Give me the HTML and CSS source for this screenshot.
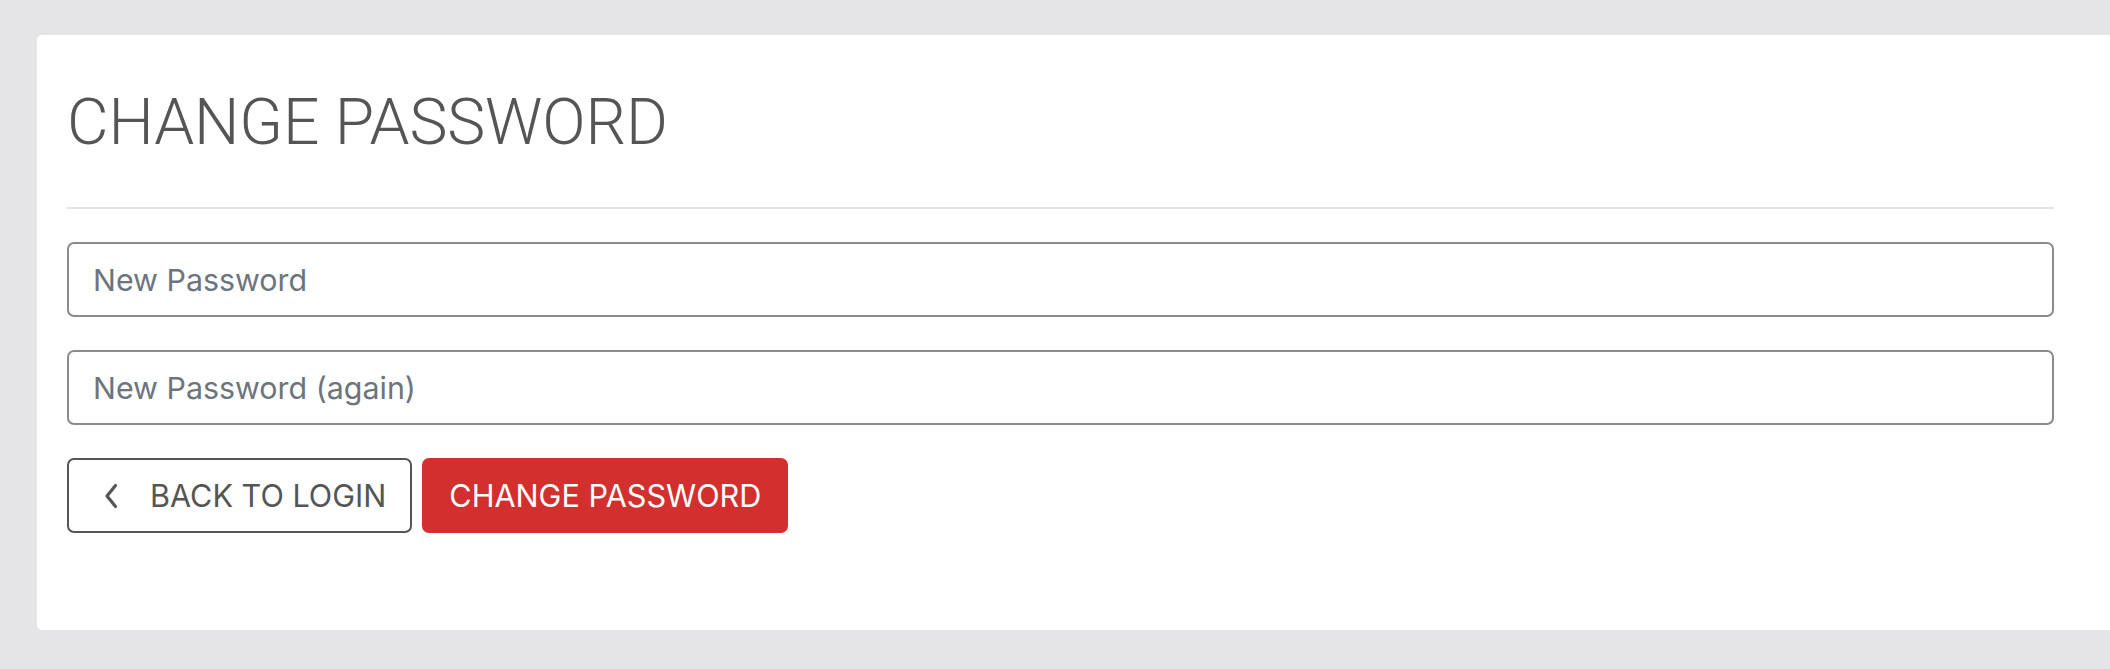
FILE: index.html
```html
<!DOCTYPE html>
<html lang="en">
<head>
<meta charset="utf-8">
<title>Change Password</title>
<link rel="stylesheet" href="styles.css">
</head>
<body>
<div class="page">
  <div class="card">
    <h1 class="title">CHANGE PASSWORD</h1>
    <hr class="divider">
    <form class="form">
      <input class="field" type="password" placeholder="New Password">
      <input class="field" type="password" placeholder="New Password (again)">
      <div class="actions">
        <button type="button" class="btn btn-outline">
          <svg class="chev" width="14" height="26" viewBox="0 0 14 26" aria-hidden="true"><polyline points="11.5,2.5 3,13 11.5,23.5" fill="none" stroke="#555" stroke-width="3.2" stroke-linecap="round" stroke-linejoin="round"/></svg>
          <span>BACK TO LOGIN</span>
        </button>
        <button type="button" class="btn btn-red">CHANGE PASSWORD</button>
      </div>
    </form>
  </div>
</div>
</body>
</html>
```

FILE: styles.css
```css
html, body {
  margin: 0;
  padding: 0;
}
body {
  background: #e5e5e8;
  overflow: hidden;
  font-family: Inter, "Noto Sans", sans-serif;
}
.page {
  padding: 35px 0 0 37px;
}
.card {
  background: #fff;
  border-radius: 5px;
  margin-right: -30px;
  padding: 30px 86px 97px 30px;
}
.title {
  margin: 26px 0 0;
  font-family: Roboto, sans-serif;
  font-weight: 300;
  font-size: 64px;
  line-height: 1;
  color: #555;
  letter-spacing: -0.15px;
}
.divider {
  margin: 52px 0 0;
  border: 0;
  height: 2px;
  background: #e3e3e3;
}
.form {
  display: flex;
  flex-direction: column;
  gap: 33px;
  margin-top: 33px;
}
.field {
  box-sizing: border-box;
  height: 75px;
  width: 100%;
  border: 2px solid #8b8b8b;
  border-radius: 7px;
  padding: 0 24px;
  font-family: Inter, sans-serif;
  font-size: 30.4px;
  color: #333;
  background: #fff;
  outline: none;
}
.field::placeholder {
  color: #6c757d;
}
.actions {
  display: flex;
  gap: 10px;
}
.btn {
  box-sizing: border-box;
  height: 75px;
  display: flex;
  align-items: center;
  border-radius: 7px;
  font-family: Inter, sans-serif;
  font-size: 30.6px;
  cursor: pointer;
}
.btn-outline {
  background: #fff;
  border: 2px solid #555;
  color: #555;
  padding: 0 24px 0 35px;
}
.chev {
  margin-right: 32px;
}
.btn-red {
  background: #d32f2f;
  border: 2px solid #d32f2f;
  color: #fff;
  padding: 0 25px;
}
```
